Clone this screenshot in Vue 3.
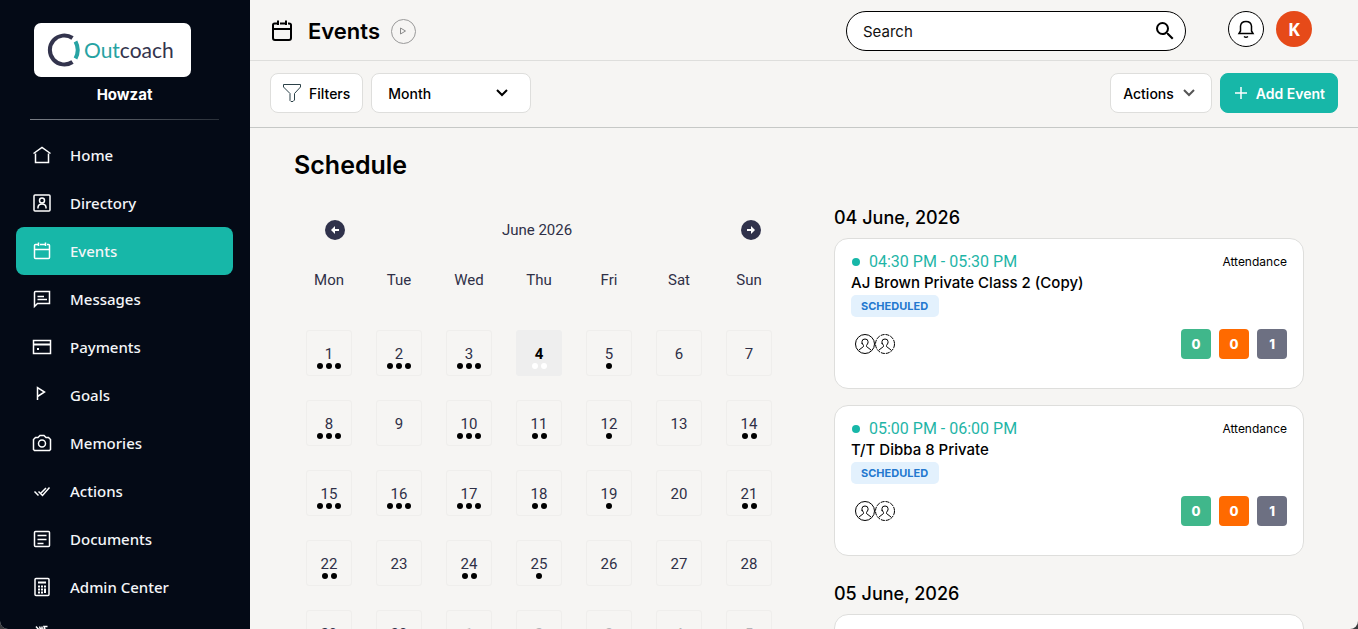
<script setup>
import { ref } from 'vue'

const search = ref('')
const view = ref('Month')

const nav = [
  { label: 'Home', icon: 'home' },
  { label: 'Directory', icon: 'directory' },
  { label: 'Events', icon: 'events', active: true },
  { label: 'Messages', icon: 'messages' },
  { label: 'Payments', icon: 'payments' },
  { label: 'Goals', icon: 'goals' },
  { label: 'Memories', icon: 'memories' },
  { label: 'Actions', icon: 'actions' },
  { label: 'Documents', icon: 'documents' },
  { label: 'Admin Center', icon: 'admin' },
  { label: 'Settings', icon: 'settings' },
]

const weekdays = ['Mon', 'Tue', 'Wed', 'Thu', 'Fri', 'Sat', 'Sun']
const dots = { 1: 3, 2: 3, 3: 3, 4: 2, 5: 1, 8: 3, 10: 3, 11: 2, 12: 1, 14: 2, 15: 3, 16: 3, 17: 3, 18: 2, 19: 1, 21: 2, 22: 2, 24: 2, 25: 1 }
const weeks = [0, 1, 2, 3, 4].map((w) =>
  weekdays.map((_, d) => {
    const n = w * 7 + d + 1
    return n > 30 ? { n: n - 30, count: 0, outside: true } : { n, count: dots[n] || 0, today: n === 4 }
  })
)

const groups = [
  {
    date: '04 June, 2026',
    events: [
      { time: '04:30 PM - 05:30 PM', title: 'AJ Brown Private Class 2 (Copy)', counts: [0, 0, 1] },
      { time: '05:00 PM - 06:00 PM', title: 'T/T Dibba 8 Private', counts: [0, 0, 1] },
    ],
  },
  {
    date: '05 June, 2026',
    events: [{ time: '05:00 PM - 06:00 PM', title: 'T/T Dibba 8 Private', counts: [0, 0, 1] }],
  },
]
const tones = ['green', 'orange', 'slate']
</script>

<template>
  <div class="app">
    <aside class="sidebar">
      <div class="logo">
        <svg width="34" height="34" viewBox="0 0 34 34" fill="none" aria-hidden="true">
          <path d="M25.500 5A14.500 14.500 0 1 0 25.500 29" stroke="#33344d" stroke-width="4" />
          <path d="M28.500 8.500Q33 17 28.500 25.500" stroke="#27a3a3" stroke-width="4" />
        </svg>
        <span class="wordmark"><span class="teal">Out</span>coach</span>
      </div>
      <p class="club">Howzat</p>
      <hr class="divider" />
      <nav>
        <a v-for="item in nav" :key="item.label" href="#" class="nav-item" :class="{ active: item.active }">
          <svg class="nav-icon" viewBox="0 0 24 24" width="24" height="24" aria-hidden="true">
            <template v-if="item.icon === 'home'">
              <path d="M3.500 10.500L12 4.500L20.500 10.500M5.500 10.500V19.500H18.500V10.500" />
            </template>
            <template v-else-if="item.icon === 'directory'">
              <rect x="4" y="4" width="16" height="16" rx="1" />
              <circle cx="12" cy="9.500" r="2.500" />
              <path d="M8 17.500V16Q8.500 13 12 13T16 16V17.500" />
            </template>
            <template v-else-if="item.icon === 'events'">
              <path d="M8 5.500H5.500Q4.500 5.500 4.500 6.500V18.500Q4.500 19.500 5.500 19.500H18.500Q19.500 19.500 19.500 18.500V6.500Q19.500 5.500 18.500 5.500H17M10 5.500H15M4.500 10.500H19.500M8.500 3.500V7M15.500 3.500V7" />
            </template>
            <template v-else-if="item.icon === 'messages'">
              <path d="M4.500 19.500V5.500Q4.500 4.500 5.500 4.500H19.500V16.500H7.500ZM7.500 9.500H14M7.500 12.500H17" />
            </template>
            <template v-else-if="item.icon === 'payments'">
              <rect x="3.500" y="5.500" width="17" height="13" />
              <path d="M3.500 9.500H20.500" stroke-width="2" />
              <path d="M7 14H9" stroke-width="2" />
            </template>
            <template v-else-if="item.icon === 'goals'">
              <path d="M7.500 17V4.500L14.500 9L7.500 13.500" />
            </template>
            <template v-else-if="item.icon === 'memories'">
              <path d="M8 6.500L10 4.500H14L16 6.500H18.500L20.500 8.500V18.500L19.500 19.500H4.500L3.500 18.500V8.500L5.500 6.500Z" />
              <circle cx="12" cy="12.500" r="3.500" />
            </template>
            <template v-else-if="item.icon === 'actions'">
              <path d="M4.500 12.500L8.500 16.500M10.500 14.500L16 9M8.500 12.500L12.500 16.500L19.500 8.500" />
            </template>
            <template v-else-if="item.icon === 'documents'">
              <rect x="4.500" y="4.500" width="15" height="15" rx="1" />
              <path d="M7.500 8.500H16.500M7.500 12.500H16.500M7.500 16.500H13.500" />
            </template>
            <template v-else-if="item.icon === 'admin'">
              <rect x="5" y="3.500" width="14" height="17" rx="1" />
              <path d="M8 7.500H16" stroke-width="2" />
              <path d="M8 11.500H10M11 11.500H13M14 11.500H16M8 14.500H10M11 14.500H13M14 14.500H16M8 17.500H10M11 17.500H13M15 14V18" stroke-width="2" />
            </template>
            <template v-else>
              <path d="M6 3.500L9 7M9.500 3.500L10.500 6M12 3.500V6M15 6L14 3.500H17.500M5 12A7 6 0 1 0 19 12A7 6 0 1 0 5 12" />
            </template>
          </svg>
          <span>{{ item.label }}</span>
        </a>
      </nav>
    </aside>

    <main class="main">
      <header class="topbar">
        <div class="page-title">
          <svg width="24" height="24" viewBox="0 0 24 24" fill="none" stroke="#000" stroke-width="2" aria-hidden="true">
            <path d="M7 4.500H4.500Q3 4.500 3 6V19Q3 21 5 21H19Q21 21 21 19V6Q21 4.500 19 4.500H18M10 4.500H15M3 10H21M8 1.500V6M16 1.500V6" />
          </svg>
          <h1>Events</h1>
          <button class="play" aria-label="Play tutorial">
            <svg width="8" height="8" viewBox="0 0 8 8" fill="none" stroke="#8a8a8a" aria-hidden="true"><path d="M1.500 1V7L6.500 4Z" /></svg>
          </button>
        </div>
        <div class="search">
          <input v-model="search" type="search" placeholder="Search" aria-label="Search" />
          <svg width="24" height="24" viewBox="0 0 24 24" aria-hidden="true">
            <path d="M15.500 14h-.79l-.28-.27A6.470 6.470 0 0 0 16 9.500 6.500 6.500 0 1 0 9.500 16c1.610 0 3.090-.59 4.230-1.570l.27.28v.79l5 4.990L20.490 19l-4.990-5zm-6 0C7.010 14 5 11.990 5 9.500S7.010 5 9.500 5 14 7.010 14 9.500 11.990 14 9.500 14z" />
          </svg>
        </div>
        <div class="account">
          <button class="bell" aria-label="Notifications">
            <svg width="18" height="20" viewBox="0 0 18 20" fill="none" stroke="#000" stroke-width="1.500" aria-hidden="true">
              <path d="M2 14.500H16L14.500 12V7Q14 2.500 9 2.500T3.500 7V12ZM7 17.500Q9 19 11 17.500" />
            </svg>
          </button>
          <button class="avatar" aria-label="Account">K</button>
        </div>
      </header>

      <div class="toolbar">
        <button class="btn filters">
          <svg width="20" height="20" viewBox="0 0 20 20" fill="none" stroke="#2b4148" stroke-linejoin="round" aria-hidden="true">
            <path d="M1.500 1.500H18.500V4L12.500 10.500V17L11 18.500H9L8 17.500V10.500L1.500 4Z" />
          </svg>
          Filters
        </button>
        <div class="select">
          <select v-model="view" aria-label="Calendar view">
            <option>Month</option>
            <option>Week</option>
            <option>Day</option>
          </select>
          <svg width="12" height="8" viewBox="0 0 12 8" fill="none" stroke="#000" stroke-width="2" aria-hidden="true"><path d="M1 1L6 6L11 1" /></svg>
        </div>
        <span class="spacer"></span>
        <button class="btn actions">
          Actions
          <svg width="12" height="8" viewBox="0 0 12 8" fill="none" stroke="#555" stroke-width="2" aria-hidden="true"><path d="M1 1L6 6L11 1" /></svg>
        </button>
        <button class="btn primary">
          <svg width="12" height="12" viewBox="0 0 12 12" fill="none" stroke="#fff" stroke-width="1.500" aria-hidden="true"><path d="M6 0V12M0 6H12" /></svg>
          Add Event
        </button>
      </div>

      <section class="content">
        <h2>Schedule</h2>
        <div class="columns">
          <div class="calendar">
            <div class="cal-head">
              <button class="round" aria-label="Previous month">
                <svg width="10" height="10" viewBox="0 0 10 10" aria-hidden="true"><path d="M1 5L5 1V4H9V6H5V9Z" fill="#fff" /></svg>
              </button>
              <span class="month">June 2026</span>
              <button class="round" aria-label="Next month">
                <svg width="10" height="10" viewBox="0 0 10 10" aria-hidden="true"><path d="M9 5L5 1V4H1V6H5V9Z" fill="#fff" /></svg>
              </button>
            </div>
            <table>
              <thead>
                <tr><th v-for="d in weekdays" :key="d" scope="col">{{ d }}</th></tr>
              </thead>
              <tbody>
                <tr v-for="(week, i) in weeks" :key="i">
                  <td v-for="day in week" :key="day.n">
                    <button class="day" :class="{ today: day.today, outside: day.outside }">
                      <span>{{ day.n }}</span>
                      <span v-if="day.count" class="dots"><i v-for="k in day.count" :key="k"></i></span>
                    </button>
                  </td>
                </tr>
              </tbody>
            </table>
          </div>

          <div class="agenda">
            <section v-for="group in groups" :key="group.date" class="group">
              <h3>{{ group.date }}</h3>
              <article v-for="event in group.events" :key="event.title" class="card">
                <div class="card-top">
                  <span class="time">{{ event.time }}</span>
                  <span class="attendance">Attendance</span>
                </div>
                <h4>{{ event.title }}</h4>
                <span class="badge">SCHEDULED</span>
                <div class="card-bottom">
                  <div class="people">
                    <svg v-for="p in 2" :key="p" width="20" height="22" viewBox="0 0 20 22" fill="none" stroke="#000" aria-hidden="true">
                      <circle cx="10" cy="11" r="9.500" :stroke-dasharray="p === 2 ? '4 1' : 'none'" />
                      <path d="M7 11V8.500Q7 6 10 6T13 8.500V10L11.500 12.500V13.500L16 17M7 10L8.500 12.500V13.500L4 17" />
                    </svg>
                  </div>
                  <div class="counts">
                    <span v-for="(c, i) in event.counts" :key="i" class="count" :class="tones[i]">{{ c }}</span>
                  </div>
                </div>
              </article>
            </section>
          </div>
        </div>
      </section>
    </main>
  </div>
</template>

<style>
html {
  background: #3a3b3e;
}
</style>

<style scoped>
* {
  box-sizing: border-box;
}
.app {
  display: flex;
  height: 100vh;
  overflow: hidden;
  border-radius: 0 0 8px 8px;
  background: #f6f5f3;
  color: #000;
  font-family: Inter, "Liberation Sans", sans-serif;
  font-size: 15px;
}
button,
input,
select {
  font: inherit;
  color: inherit;
}
button {
  display: flex;
  align-items: center;
  justify-content: center;
  padding: 0;
  border: 0;
  background: none;
  cursor: pointer;
}
h1,
h2,
h3,
h4,
p {
  margin: 0;
}

.sidebar {
  flex: 0 0 250px;
  padding: 23px 17px 0 16px;
  background: #040a16;
  color: #fff;
  overflow: hidden;
}
.logo {
  display: flex;
  align-items: center;
  gap: 3px;
  height: 54px;
  margin: 0 42px 0 18px;
  padding-left: 13px;
  border-radius: 7px;
  background: #fff;
}
.wordmark {
  color: #33344d;
  font-family: Lato, sans-serif;
  font-size: 21px;
  line-height: 24px;
}
.teal {
  color: #27a3a3;
}
.club {
  margin-top: 8px;
  font-size: 15px;
  font-weight: 700;
  line-height: 20px;
  text-align: center;
}
.divider {
  height: 1px;
  margin: 14px 14px 11px;
  border: 0;
  background: linear-gradient(90deg, #7a7e86, #2a3039);
}
.nav-item {
  display: flex;
  align-items: center;
  gap: 16px;
  height: 48px;
  padding: 0 14px;
  border-radius: 8px;
  color: #f3f5f8;
  font-family: "Noto Sans", "Open Sans", sans-serif;
  font-size: 15px;
  font-weight: 500;
  text-decoration: none;
}
.nav-item.active {
  background: #17b7a8;
}
.nav-icon {
  fill: none;
  stroke: #fff;
  stroke-width: 1.500;
}

.main {
  flex: 1;
  min-width: 0;
}
.topbar {
  display: flex;
  align-items: flex-start;
  padding: 11px 46px 9px 20px;
  border-bottom: 1px solid #dededc;
}
.page-title {
  display: flex;
  flex: 1;
  align-items: center;
  height: 40px;
}
h1 {
  margin: 0 11px 0 14px;
  font-size: 22px;
  font-weight: 600;
}
.play {
  width: 25px;
  height: 25px;
  border: 1px solid #999;
  border-radius: 50%;
}
.search {
  display: flex;
  align-items: center;
  width: 340px;
  height: 40px;
  padding: 0 8px 0 16px;
  border: 1px solid #000;
  border-radius: 20px;
  background: #fff;
}
.search input {
  flex: 1;
  min-width: 0;
  padding: 0;
  border: 0;
  outline: 0;
  background: none;
  font-size: 15px;
}
.search input::placeholder {
  color: #111;
  opacity: 1;
}
.account {
  display: flex;
  gap: 12px;
  margin-left: 42px;
}
.bell,
.avatar {
  width: 36px;
  height: 36px;
  border-radius: 50%;
}
.bell {
  border: 1px solid #000;
  background: #fff;
}
.avatar {
  background: #e64a19;
  color: #fff;
  font-family: "Noto Sans", sans-serif;
  font-size: 18px;
  font-weight: 700;
}

.toolbar {
  display: flex;
  gap: 8px;
  padding: 12px 20px 14px;
  border-bottom: 1px solid #c6c8c6;
}
.spacer {
  flex: 1;
}
.btn,
.select {
  height: 40px;
  border: 1px solid #dededc;
  border-radius: 8px;
  background: #fff;
  font-size: 14px;
  font-weight: 500;
}
.filters {
  gap: 7px;
  padding: 0 12px 0 11px;
}
.select {
  display: flex;
  align-items: center;
  width: 160px;
  position: relative;
}
.select select {
  width: 100%;
  height: 100%;
  padding: 0 16px;
  border: 0;
  appearance: none;
  background: none;
}
.select svg {
  position: absolute;
  right: 22px;
  pointer-events: none;
}
.actions {
  gap: 9px;
  padding: 0 16px 0 12px;
}
.primary {
  gap: 9px;
  padding: 0 12px 0 14px;
  border-color: #17b7a8;
  background: #17b7a8;
  color: #fff;
  font-weight: 600;
}

.content {
  padding: 20px 54px 0 44px;
}
h2 {
  font-size: 25px;
  font-weight: 600;
  line-height: 34px;
}
.columns {
  display: grid;
  grid-template-columns: 49fr 47fr;
  gap: 50px;
  padding-top: 22px;
}
.calendar {
  color: #2f3047;
  font-family: Roboto, sans-serif;
  font-size: 15px;
}
.cal-head {
  display: flex;
  align-items: center;
  height: 20px;
  margin: 16px 23px 0 31px;
}
.month {
  flex: 1;
  padding-right: 12px;
  font-size: 15px;
  text-align: center;
}
.round {
  width: 20px;
  height: 20px;
  border-radius: 50%;
  background: #30324b;
}
table {
  width: 100%;
  margin-top: 20px;
  border-collapse: collapse;
  table-layout: fixed;
}
th {
  height: 58px;
  padding: 0 0 18px;
  font-weight: 400;
}
th,
td {
  text-align: center;
}
td {
  height: 70px;
  padding: 0;
}
.day {
  flex-direction: column;
  width: 46px;
  height: 46px;
  margin: 0 auto;
  padding-top: 15px;
  justify-content: flex-start;
  border: 1px solid #efeeec;
  border-radius: 3px;
  line-height: 16px;
}
.today {
  border-color: #eeeeee;
  background: #eeeeee;
  color: #000;
  font-weight: 700;
}
.outside {
  color: #b4b4b8;
}
.dots {
  display: flex;
  gap: 3px;
  margin-top: 1px;
}
.dots i {
  width: 6px;
  height: 6px;
  border-radius: 50%;
  background: #000;
}
.today .dots i {
  background: #fff;
}

h3 {
  padding: 3px 0 9px;
  font-size: 18px;
  font-weight: 500;
  line-height: 22px;
}
.group {
  margin-bottom: 24px;
}
.card {
  height: 151px;
  margin-bottom: 16px;
  padding: 12px 16px;
  border: 1px solid #dededc;
  border-radius: 14px;
  background: #fff;
}
.card-top {
  display: flex;
  align-items: center;
  justify-content: space-between;
  line-height: 21px;
}
.time {
  display: flex;
  align-items: center;
  gap: 9px;
  color: #1fb5a7;
  font-family: Roboto, sans-serif;
  font-size: 16px;
}
.time::before {
  content: "";
  width: 8px;
  height: 8px;
  margin-left: 1px;
  border-radius: 50%;
  background: #17b7a8;
}
.attendance {
  font-size: 12px;
}
h4 {
  font-size: 15px;
  font-weight: 500;
  line-height: 21px;
}
.badge {
  display: inline-block;
  margin-top: 2px;
  padding: 0 11px 0 10px;
  border-radius: 5px;
  background: #e3f1fd;
  color: #2478cf;
  font-size: 11px;
  font-weight: 700;
  line-height: 22px;
}
.card-bottom {
  display: flex;
  align-items: center;
  justify-content: space-between;
  margin-top: 12px;
}
.people {
  display: flex;
  padding-left: 4px;
}
.counts {
  display: flex;
  gap: 8px;
}
.count {
  width: 30px;
  border-radius: 4px;
  color: #fff;
  font-size: 13px;
  font-weight: 800;
  line-height: 30px;
  text-align: center;
}
.green {
  background: #40b78b;
}
.orange {
  background: #ff6a00;
}
.slate {
  background: #6d7082;
}
</style>
